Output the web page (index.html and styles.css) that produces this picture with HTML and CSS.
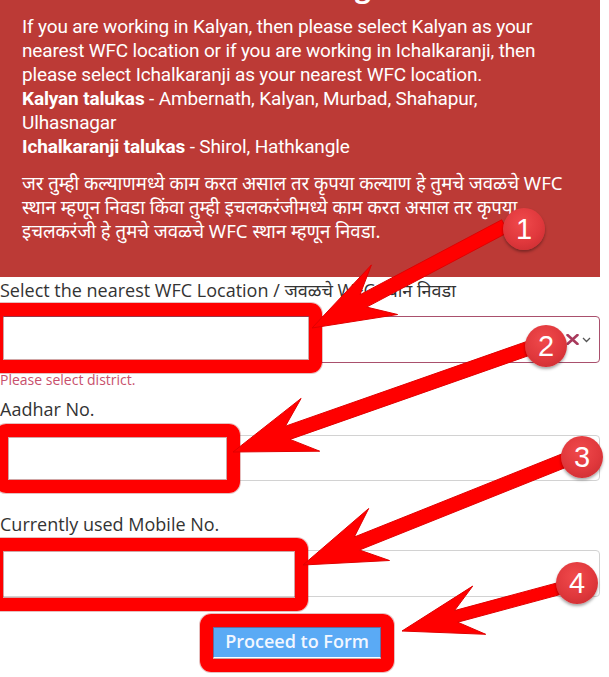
FILE: index.html
```html
<!DOCTYPE html>
<html lang="en">
<head>
<meta charset="utf-8">
<title>WFC Location</title>
<link rel="stylesheet" href="styles.css">
</head>
<body>
<div class="page">
  <div class="notice">
    <h2 class="notice-title">Warning</h2>
    <p class="notice-en">If you are working in Kalyan, then please select Kalyan as your nearest WFC location or if you are working in Ichalkaranji, then please select Ichalkaranji as your nearest WFC location.<br><b>Kalyan talukas</b> - Ambernath, Kalyan, Murbad, Shahapur, Ulhasnagar<br><b>Ichalkaranji talukas</b> - Shirol, Hathkangle</p>
    <p class="notice-mr">जर तुम्ही कल्याणमध्ये काम करत असाल तर कृपया कल्याण हे तुमचे जवळचे WFC स्थान म्हणून निवडा किंवा तुम्ही इचलकरंजीमध्ये काम करत असाल तर कृपया इचलकरंजी हे तुमचे जवळचे WFC स्थान म्हणून निवडा.</p>
  </div>

  <form class="form">
    <div class="field field-select">
      <label class="label">Select the nearest WFC Location / जवळचे WFC स्थान निवडा</label>
      <div class="select is-invalid">
        <svg class="clear" width="13" height="11" viewBox="0 0 13 11"><path d="M1.5 1 L11.5 10 M11.5 1 L1.5 10" stroke="#a83a5c" stroke-width="2.6" stroke-linecap="round"/></svg>
        <svg class="chev" width="9" height="6" viewBox="0 0 9 6"><path d="M1 1 L4.5 4.5 L8 1" fill="none" stroke="#555" stroke-width="1.3"/></svg>
      </div>
      <div class="feedback">Please select district.</div>
    </div>
    <div class="field field-aadhar">
      <label class="label">Aadhar No.</label>
      <input class="control control-aadhar" type="text">
    </div>
    <div class="field field-mobile">
      <label class="label">Currently used Mobile No.</label>
      <input class="control control-mobile" type="text">
    </div>
    <div class="actions">
      <button class="btn" type="button">Proceed to Form</button>
    </div>
  </form>

  <div class="mark mark-1"></div>
  <div class="mark mark-2"></div>
  <div class="mark mark-3"></div>
  <div class="mark mark-4"></div>

  <svg class="arrows" width="609" height="677" viewBox="0 0 609 677">
    <polygon points="312,328 397.6,314.5 366.6,307.1 508.3,232.2 501.7,219.8 360,294.7 371.4,264.9"/>
    <polygon points="233,452 319.7,451.2 290,439.4 537.3,352.6 532.7,339.4 285.4,426.2 301.1,398.4"/>
    <polygon points="303,565 389.5,560.5 359.5,550 570.6,465.5 565.4,452.5 354.3,537 368.7,508.5"/>
    <polygon points="402,631 485.7,634.3 457.7,622.2 566.6,592.8 563.4,581.2 454.5,610.6 472.7,586.1"/>
  </svg>

  <div class="badge badge-1">1</div>
  <div class="badge badge-2">2</div>
  <div class="badge badge-3">3</div>
  <div class="badge badge-4">4</div>
</div>
</body>
</html>
```

FILE: styles.css
```css
body {
  margin: 0;
  background: #ffffff;
}

.page {
  position: relative;
  width: 609px;
  height: 677px;
  overflow: hidden;
  background: #ffffff;
}

/* ---------- red notice panel ---------- */
.notice {
  display: flow-root;
  width: 600px;
  height: 277px;
  box-sizing: border-box;
  padding: 0 28px 0 22px;
  background: #bc3a36;
  color: #ffffff;
  font-family: Roboto, "Noto Sans", sans-serif;
  font-size: 19px;
  line-height: 24px;
  letter-spacing: -0.15px;
}

.notice-title {
  margin: -31px 0 0;
  height: 34px;
  padding-left: 30px;
  font-family: "Open Sans", sans-serif;
  font-size: 28px;
  line-height: 34px;
  font-weight: 700;
  text-align: center;
  letter-spacing: 0;
}

.notice-en {
  margin: 12px 0 0;
}

.notice-en b {
  font-weight: 700;
}

.notice-mr {
  margin: 15px 0 0;
  font-family: "Noto Sans Devanagari", "Lohit Devanagari", "Noto Sans", sans-serif;
  font-size: 18.6px;
  letter-spacing: 0;
}

/* ---------- form ---------- */
.form {
  width: 600px;
  font-family: "Open Sans", "Noto Sans Devanagari", sans-serif;
  color: #333333;
}

.label {
  display: block;
  margin: 0 0 12px;
  font-size: 18px;
  line-height: 27px;
}

.field-select {
  margin-bottom: 6px;
}

.field-aadhar {
  margin-bottom: 30px;
}

.select {
  display: flex;
  align-items: center;
  justify-content: flex-end;
  gap: 3px;
  height: 47px;
  box-sizing: border-box;
  padding-right: 8px;
  border: 1px solid #a9506d;
  border-radius: 4px;
  background: #ffffff;
}

.feedback {
  margin-top: 6px;
  font-size: 14px;
  line-height: 21px;
  color: #c8506c;
}

.control {
  display: block;
  width: 600px;
  box-sizing: border-box;
  margin: 0;
  border: 1px solid #d2d2d2;
  border-radius: 4px;
  background: #ffffff;
}

.control-aadhar {
  height: 46px;
}

.control-mobile {
  height: 47px;
}

.actions {
  margin-top: 29px;
  padding-right: 6px;
  text-align: center;
}

.btn {
  width: 168px;
  height: 31px;
  padding: 0;
  border: 0;
  border-radius: 0;
  background: #5aaaf5;
  color: #f2f7ff;
  font-family: "Open Sans", sans-serif;
  font-size: 18px;
  font-weight: 600;
  line-height: 31px;
}

/* ---------- annotation overlay ---------- */
.mark {
  position: absolute;
  box-sizing: border-box;
  border: 13px solid #ff0000;
  border-radius: 11px;
  box-shadow: 0 0 0 1px rgba(150, 0, 0, 0.25), inset 0 0 0 1px rgba(120, 0, 0, 0.35);
}

.mark-1 { left: -10px; top: 303px; width: 332px; height: 70px; }
.mark-2 { left: -5px;  top: 424px; width: 245px; height: 69px; }
.mark-3 { left: -10px; top: 538px; width: 318px; height: 73px; }
.mark-4 { left: 200px; top: 614px; width: 194px; height: 58px; }

.arrows {
  position: absolute;
  left: 0;
  top: 0;
  pointer-events: none;
}

.arrows polygon {
  fill: #ff0000;
  stroke: #e00000;
  stroke-width: 1;
  stroke-linejoin: round;
}

.badge {
  position: absolute;
  width: 42px;
  height: 42px;
  border-radius: 50%;
  background: radial-gradient(circle at 45% 35%, #f04a4c 0%, #e0383c 55%, #c42a2f 100%);
  box-shadow: 0 2px 3px rgba(0, 0, 0, 0.35);
  color: #ffffff;
  font-family: "Liberation Sans", Arial, sans-serif;
  font-size: 29px;
  line-height: 42px;
  text-align: center;
}

.badge-1 { left: 503px; top: 208px; }
.badge-2 { left: 525px; top: 325px; }
.badge-3 { left: 561px; top: 436px; }
.badge-4 { left: 556px; top: 562px; }
```
